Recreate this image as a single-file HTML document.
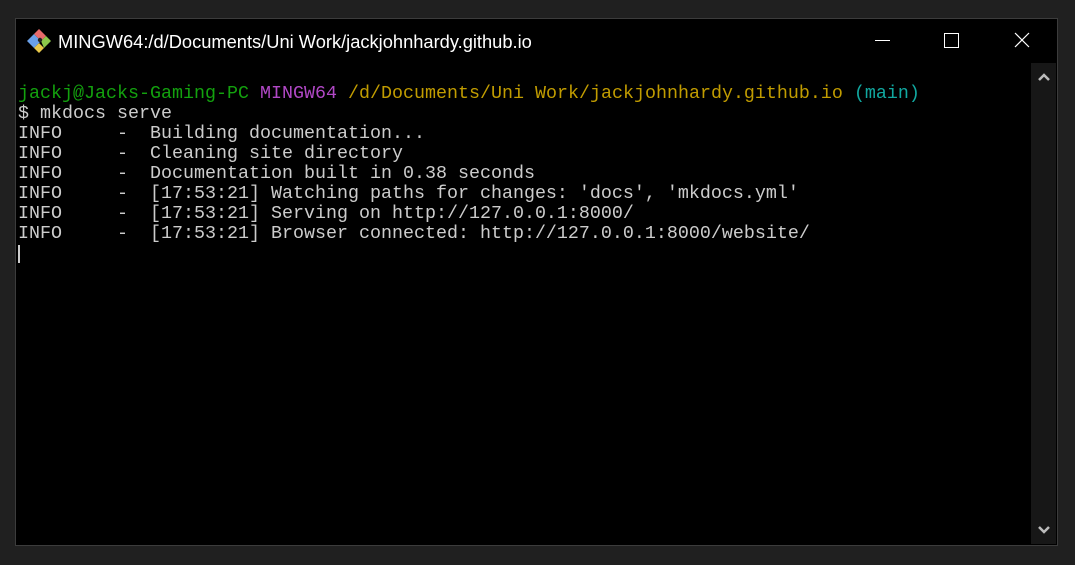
<!DOCTYPE html>
<html><head><style>
html,body{margin:0;padding:0;background:#202020;width:1075px;height:565px;overflow:hidden}
.win{position:absolute;left:15px;top:18px;width:1041px;height:526px;border:1px solid #3c3c3c;background:#000}
.title{position:absolute;left:58px;top:31px;font:18.3px "Liberation Sans",sans-serif;color:#fff}
.term{position:absolute;left:18px;top:84px;font:18.33px/20px "Liberation Mono",monospace;color:#cccccc;white-space:pre}
.g{color:#13a10e}.p{color:#b148c6}.y{color:#c19c00}.c{color:#11a8a0}
.sb{position:absolute;left:1031px;top:63px;width:25px;height:481px;background:#171717}
.cur{position:absolute;left:18px;top:245px;width:2px;height:18px;background:#ccc}
</style></head><body>
<div class="win"></div>
<svg style="position:absolute;left:26px;top:28px" width="26" height="26" viewBox="0 0 26 26">
<polygon points="1,13 8,6 15,13 8,20" fill="#6aa0e8"/>
<polygon points="8,6 13,1 20,8 15,13" fill="#e86a6a"/>
<polygon points="8,20 13,15 18,20 13,25" fill="#e8c84a"/>
<polygon points="15,13 20,8 25,13 18,20" fill="#8cc84a"/>
<circle cx="14" cy="12" r="2.2" fill="#222"/>
</svg>
<div class="title">MINGW64:/d/Documents/Uni Work/jackjohnhardy.github.io</div>
<div style="position:absolute;left:875px;top:40px;width:15px;height:1px;background:#fff"></div>
<div style="position:absolute;left:944px;top:33px;width:13px;height:13px;border:1px solid #fff"></div>
<svg style="position:absolute;left:1014px;top:32px" width="16" height="16"><path d="M1 1L15 15M15 1L1 15" stroke="#fff" stroke-width="1.2"/></svg>
<div class="sb"></div>
<svg style="position:absolute;left:1038px;top:72px" width="12" height="10"><path d="M1 8L6 3L11 8" stroke="#bbb" stroke-width="2.5" fill="none"/></svg>
<svg style="position:absolute;left:1038px;top:525px" width="12" height="10"><path d="M1 2L6 7L11 2" stroke="#bbb" stroke-width="2.5" fill="none"/></svg>
<div class="term"><span class="g">jackj@Jacks-Gaming-PC</span> <span class="p">MINGW64</span> <span class="y">/d/Documents/Uni Work/jackjohnhardy.github.io</span> <span class="c">(main)</span>
$ mkdocs serve
INFO     -  Building documentation...
INFO     -  Cleaning site directory
INFO     -  Documentation built in 0.38 seconds
INFO     -  [17:53:21] Watching paths for changes: 'docs', 'mkdocs.yml'
INFO     -  [17:53:21] Serving on http://127.0.0.1:8000/
INFO     -  [17:53:21] Browser connected: http://127.0.0.1:8000/website/</div>
<div class="cur"></div>
</body></html>
